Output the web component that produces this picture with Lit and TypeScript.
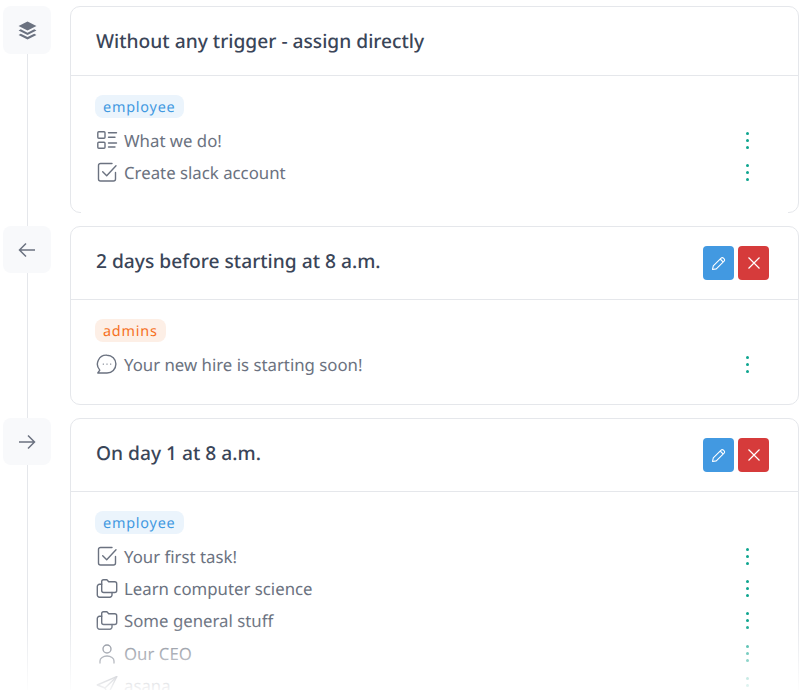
import { LitElement, html, css, svg } from "lit";
import { customElement } from "lit/decorators.js";

type ItemIcon = "list" | "check" | "chat" | "folders" | "user" | "send";

interface Item {
  icon: ItemIcon;
  label: string;
}

interface Step {
  title: string;
  icon: "layers" | "back" | "forward";
  actions: boolean;
  group: string;
  tone: "blue" | "orange";
  items: Item[];
}

const STEPS: Step[] = [
  {
    title: "Without any trigger - assign directly",
    icon: "layers",
    actions: false,
    group: "employee",
    tone: "blue",
    items: [
      { icon: "list", label: "What we do!" },
      { icon: "check", label: "Create slack account" },
    ],
  },
  {
    title: "2 days before starting at 8 a.m.",
    icon: "back",
    actions: true,
    group: "admins",
    tone: "orange",
    items: [{ icon: "chat", label: "Your new hire is starting soon!" }],
  },
  {
    title: "On day 1 at 8 a.m.",
    icon: "forward",
    actions: true,
    group: "employee",
    tone: "blue",
    items: [
      { icon: "check", label: "Your first task!" },
      { icon: "folders", label: "Learn computer science" },
      { icon: "folders", label: "Some general stuff" },
      { icon: "user", label: "Our CEO" },
      { icon: "send", label: "asana" },
    ],
  },
];

const ITEM_ICONS: Record<ItemIcon, any> = {
  list: svg`<rect x="2.800" y="3.700" width="7.200" height="6.600" rx="1"/><rect x="2.800" y="14.300" width="7.200" height="6" rx="1"/><path d="M13.500 4.700h8M13.500 9.300h6.500M13.500 15h8M13.500 19h6.500"/>`,
  check: svg`<path d="M20.500 12.500V19a2 2 0 0 1-2 2H5.500a2 2 0 0 1-2-2V5.500a2 2 0 0 1 2-2H17"/><path d="M7.700 11.700l4 4 9.300-10"/>`,
  chat: svg`<path d="M12 3.200a8.900 8.900 0 0 1 0 17.800H2.800l2-2.900A8.900 8.900 0 0 1 12 3.200z"/><path d="M8.300 12.100h.01M12 12.100h.01M15.700 12.100h.01"/>`,
  folders: svg`<path d="M6.700 14.500V5.500a1.800 1.800 0 0 1 1.800-1.800h3.400l1.800 2h6a2 2 0 0 1 2 2V14.500a2 2 0 0 1-2 2H8.700a2 2 0 0 1-2-2z"/><path d="M6.700 8.300H4.500a2.200 2.200 0 0 0-2.200 2.200v8.500a2.200 2.200 0 0 0 2.200 2.200H14.800a2.200 2.200 0 0 0 2.200-2.200v-2.500"/>`,
  user: svg`<circle cx="12" cy="8" r="4"/><path d="M5 22v-2a7 5 0 0 1 14 0v2"/>`,
  send: svg`<path d="M21.700 3.700L2.300 12l7.700 3 3 6.500z"/><path d="M21.700 3.700L10 15"/>`,
};

@customElement("app-root")
export class AppRoot extends LitElement {
  static styles = css`
    :host {
      display: block;
      position: relative;
      height: 690px;
      overflow: hidden;
      background: #fff;
      font-family: "Noto Sans", sans-serif;
      text-rendering: geometricPrecision;
    }
    .timeline {
      display: flex;
      flex-direction: column;
      gap: 13px;
      padding: 6px 3px 0 3px;
    }
    .step {
      display: grid;
      grid-template-columns: 48px 1fr;
      column-gap: 19px;
    }
    .rail {
      display: flex;
      flex-direction: column;
      align-items: center;
    }
    .rail::after {
      content: "";
      flex: 1;
      width: 1px;
      margin-bottom: -13px;
      background: #e5e7eb;
    }
    .node {
      width: 48px;
      height: 47.5px;
      flex: none;
      display: flex;
      align-items: center;
      justify-content: center;
      border-radius: 8px;
      background: #f8f9fb;
      color: #6b7280;
    }
    .node svg {
      width: 20px;
      height: 20px;
      margin-top: 1px;
    }
    .node svg.layers {
      width: 21px;
      height: 21px;
    }
    .card {
      position: relative;
      border: 1px solid #e5e7eb;
      border-radius: 10px;
      background: #fff;
      min-width: 0;
    }
    /* first card: bottom edge is hidden between the corners */
    .step:first-child .card::after {
      content: "";
      position: absolute;
      left: 10px;
      right: 10px;
      bottom: -1px;
      height: 1px;
      background: #fff;
    }
    .head {
      display: flex;
      align-items: center;
      justify-content: space-between;
      min-height: 68px;
      padding: 0 29px 0 25px;
      border-bottom: 1px solid #e5e7eb;
    }
    .head.tall {
      min-height: 73px;
      padding-bottom: 4px;
      box-sizing: border-box;
    }
    h2 {
      margin: 0;
      font-size: 19.2px;
      font-weight: 500;
      line-height: 28px;
      color: #3a4558;
    }
    .actions {
      display: flex;
      gap: 4px;
      margin-top: 4px;
    }
    .btn {
      width: 31px;
      height: 34px;
      display: flex;
      align-items: center;
      justify-content: center;
      border-radius: 4px;
      color: #fff;
    }
    .btn svg {
      width: 16px;
      height: 16px;
    }
    .edit {
      background: #4299e1;
    }
    .remove {
      background: #d63b3b;
    }
    .body {
      padding: 19px 24px 22.9px;
    }
    .badge {
      display: inline-block;
      box-sizing: border-box;
      height: 23px;
      padding: 1px 8px 0;
      border-radius: 8px;
      font-size: 14.4px;
      line-height: 23px;
      letter-spacing: 0.8px;
      vertical-align: top;
    }
    .badge.blue {
      background: #ebf4fc;
      color: #4299e1;
    }
    .badge.orange {
      background: #fdefe6;
      color: #f6711f;
    }
    .items {
      margin-top: 6.3px;
    }
    .item {
      display: flex;
      align-items: center;
      height: 32.4px;
      color: #6b7280;
      font-size: 16.8px;
    }
    .item > svg {
      width: 24px;
      height: 24px;
      flex: none;
      margin: 0 5px 1px 0;
    }
    .label {
      flex: 1;
    }
    .more {
      width: 3px;
      height: 17px;
      margin-right: 25px;
      display: flex;
      flex-direction: column;
      justify-content: space-between;
    }
    .more i {
      display: block;
      width: 3px;
      height: 3px;
      border-radius: 50%;
      background: #0ea58f;
    }
    .fade {
      position: absolute;
      left: 0;
      right: 0;
      bottom: 0;
      height: 70px;
      background: linear-gradient(to bottom, rgba(255, 255, 255, 0), rgba(255, 255, 255, 0.92));
      pointer-events: none;
    }
  `;

  private nodeIcon(kind: Step["icon"]) {
    if (kind === "layers") {
      return html`<svg class="layers" viewBox="0 0 20 20" fill="currentColor">
        <path d="M10 1.500l8.500 4.300L10 10.100 1.500 5.800z" />
        <path d="M3.600 8.900L1.500 10 10 14.300 18.500 10l-2.100-1.100L10 12.100z" />
        <path d="M3.600 13.100l-2.100 1.100L10 18.500l8.500-4.300-2.100-1.100L10 16.300z" />
      </svg>`;
    }
    const d = kind === "back" ? "M18 10H2.500M9 3.500L2.500 10 9 16.500" : "M2 10h15.500M11 3.500l6.500 6.500-6.500 6.500";
    return html`<svg viewBox="0 0 20 20" fill="none" stroke="currentColor" stroke-width="1.500">
      <path d=${d} />
    </svg>`;
  }

  private renderItem(item: Item) {
    return html`<div class="item">
      <svg viewBox="0 0 24 24" fill="none" stroke="currentColor" stroke-width="1.400" stroke-linecap="round" stroke-linejoin="round">
        ${ITEM_ICONS[item.icon]}
      </svg>
      <span class="label">${item.label}</span>
      <span class="more"><i></i><i></i><i></i></span>
    </div>`;
  }

  private renderStep(step: Step) {
    return html`<section class="step">
      <div class="rail"><div class="node">${this.nodeIcon(step.icon)}</div></div>
      <div class="card">
        <div class="head ${step.actions ? "tall" : ""}">
          <h2>${step.title}</h2>
          ${step.actions
            ? html`<div class="actions">
                <span class="btn edit">
                  <svg viewBox="0 0 16 16" fill="none" stroke="currentColor" stroke-width="1.100" stroke-linejoin="round">
                    <path d="M1.500 14.500l.8-3.600 7.800-7.800a1.600 1.600 0 0 1 2.300 0l.7.700a1.600 1.600 0 0 1 0 2.300l-7.800 7.800z" />
                    <path d="M9.200 4l2.800 2.800" />
                  </svg>
                </span>
                <span class="btn remove">
                  <svg viewBox="0 0 16 16" fill="none" stroke="currentColor" stroke-width="1.200">
                    <path d="M2.500 2.500l11 11M13.500 2.500l-11 11" />
                  </svg>
                </span>
              </div>`
            : ""}
        </div>
        <div class="body">
          <span class="badge ${step.tone}">${step.group}</span>
          <div class="items">${step.items.map((i) => this.renderItem(i))}</div>
        </div>
      </div>
    </section>`;
  }

  render() {
    return html`<div class="timeline">${STEPS.map((s) => this.renderStep(s))}</div>
      <div class="fade"></div>`;
  }
}
